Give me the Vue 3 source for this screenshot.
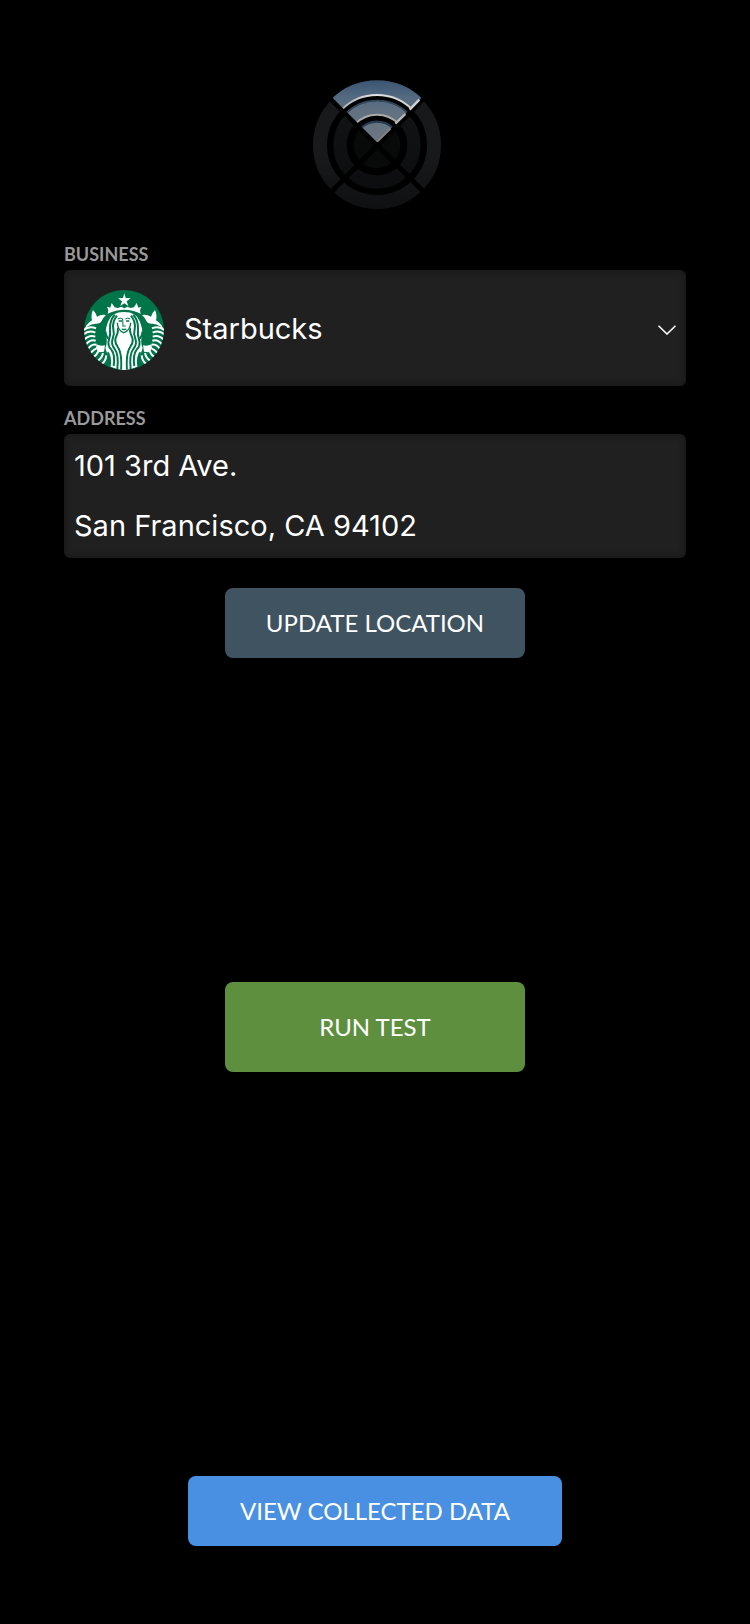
<script setup>
import { ref } from 'vue'

const business = ref('Starbucks')
const street = ref('101 3rd Ave.')
const city = ref('San Francisco, CA 94102')
</script>

<template>
  <main class="screen">
    <svg class="logo" viewBox="38 29 390 390" aria-hidden="true">
      <defs>
        <linearGradient id="steel" gradientUnits="userSpaceOnUse" x1="0" y1="30" x2="0" y2="218">
          <stop offset="0" stop-color="#3a5471" />
          <stop offset="0.25" stop-color="#526980" />
          <stop offset="0.5" stop-color="#617181" />
          <stop offset="1" stop-color="#6c7781" />
        </linearGradient>
        <linearGradient id="coal" gradientUnits="userSpaceOnUse" x1="0" y1="80" x2="0" y2="419">
          <stop offset="0" stop-color="#18191b" />
          <stop offset="0.5" stop-color="#17191b" />
          <stop offset="1" stop-color="#0e1011" />
        </linearGradient>
        <linearGradient id="coal-inner" gradientUnits="userSpaceOnUse" x1="0" y1="100" x2="0" y2="350">
          <stop offset="0" stop-color="#131415" />
          <stop offset="1" stop-color="#0c0d0e" />
        </linearGradient>
        <linearGradient id="silver" gradientUnits="userSpaceOnUse" x1="100" y1="0" x2="370" y2="0">
          <stop offset="0" stop-color="#9ba0a5" />
          <stop offset="0.45" stop-color="#e3e3e3" />
          <stop offset="1" stop-color="#c9c9c9" />
        </linearGradient>
        <clipPath id="beam"><path d="M233 216 L101 84 L60 20 H410 L363 86 Z" /></clipPath>
      </defs>
      <g fill="none">
        <circle cx="233" cy="224" r="171" stroke="url(#coal)" stroke-width="42" />
        <circle cx="233" cy="224" r="111" stroke="url(#coal-inner)" stroke-width="40" />
        <circle cx="233" cy="224" r="70" fill="#080909" />
      </g>
      <path d="M88 79 L376 367 M378 79 L92 369" stroke="#000" stroke-width="15" />
      <g clip-path="url(#beam)" fill="none">
        <path d="M233 216 L60 43 V0 H410 V39 Z" fill="#000" />
        <circle cx="233" cy="224" r="172" stroke="url(#steel)" stroke-width="44" />
        <circle cx="233" cy="224" r="111" stroke="url(#steel)" stroke-width="42" />
        <circle cx="233" cy="224" r="70" fill="url(#steel)" />
        <path d="M184 174 A70 70 0 0 1 282 174" stroke="#263a50" stroke-width="7" />
        <path d="M139 130 A133 133 0 0 1 327 130" stroke="#33475c" stroke-width="5" />
        <path d="M127 118 A150 150 0 0 1 339 118" stroke="url(#silver)" stroke-width="6" />
        <path d="M169 160 A90 90 0 0 1 297 160" stroke="#aaa9a8" stroke-width="6" />
      </g>
      <path d="M331 118 L360 88" stroke="#d2d2d2" stroke-width="7" />
      <path d="M288 160 L318 131" stroke="#b9b9b9" stroke-width="7" />
      <path d="M234 214 L274 175" stroke="#858585" stroke-width="5" />
    </svg>

    <form class="form" @submit.prevent>
      <label class="caption" for="business">BUSINESS</label>
      <div class="picker">
        <svg class="brand" viewBox="27 30 240 240" aria-hidden="true">
          <defs>
            <clipPath id="disc"><circle cx="147" cy="150" r="120" /></clipPath>
          </defs>
          <circle cx="147" cy="150" r="120" fill="#00754a" />
          <g clip-path="url(#disc)">
            <path
              d="M148 40 L152 54 L167 55 L155 64 L160 78 L148 70 L136 78 L141 64 L129 55 L144 54 Z"
              fill="#fff"
            />
            <path
              d="M98 101 L100 91 L96 80 L106 83 L110 69 L119 82 L129 84 L139 80 L148 85 L157 80 L167 84 L177 82 L185 69 L190 83 L199 80 L195 91 L197 101 Q148 78 98 101 Z"
              fill="#fff"
            />
            <g id="half">
              <path
                d="M54 90 Q65 101 66 110 Q78 103 93 105 Q84 113 80 123 Q75 132 62 131 Q49 131 39 139 L28 151 Q33 132 51 121 Q47 104 54 90 Z"
                fill="#fff"
              />
              <g fill="none" stroke="#fff" stroke-width="6">
                <path d="M26 150 Q43 136 63 145" />
                <path d="M24 164 Q42 149 61 158" />
                <path d="M26 181 Q42 163 61 170" />
                <path d="M30 197 Q44 177 62 182" />
                <path d="M37 210 Q49 190 64 194" />
                <path d="M45 222 Q54 208 72 202" />
                <path d="M54 232 Q66 225 70 213" />
                <path d="M67 243 Q81 235 84 219" />
                <path d="M80 252 Q92 244 94 226" />
              </g>
              <path d="M64 193 Q76 199 90 196 L87 215 L72 217 Q62 211 64 193 Z" fill="#fff" />
            </g>
            <use href="#half" transform="translate(294 0) scale(-1 1)" />
            <path
              d="M147 96 Q109 96 99 125 Q88 154 94 172 Q98 188 91 204 Q94 219 103 230 Q109 242 107 260 L147 274 L187 260 Q185 242 191 230 Q200 219 203 204 Q196 188 200 172 Q206 154 195 125 Q185 96 147 96 Z"
              fill="#fff"
            />
            <g id="hair" fill="none" stroke="#00754a" stroke-width="6">
              <path d="M119 104 Q103 124 105 149 Q107 164 102 178 Q96 196 109 209 Q121 224 116 258" />
              <path d="M126 107 Q111 125 115 148 Q119 162 113 176 Q107 193 119 207 Q132 224 127 267" />
              <path d="M129 143 Q130 157 124 169 Q116 184 128 200 Q142 220 138 271" />
              <path d="M91 154 Q92 165 99 176 M98 217 Q107 231 105 253" />
            </g>
            <use href="#hair" transform="translate(294 0) scale(-1 1)" />
            <path
              d="M147 101 Q126 101 126 126 Q127 151 140 158 L139 164 Q127 171 127 186 Q128 197 136 207 Q144 222 143 270 H151 Q150 222 158 207 Q166 197 167 186 Q167 171 155 164 L154 158 Q167 151 168 126 Q168 101 147 101 Z"
              fill="#fff"
            />
            <g fill="none" stroke="#00754a" stroke-width="4">
              <path d="M127 128 Q128 151 146 158 Q166 151 167 128" />
              <path d="M128 117 Q136 112 143 117 L144 137 M151 117 Q158 112 166 117" stroke-width="3" />
              <path d="M131 123 H141 M153 123 H163" />
              <path d="M142 138 H152" stroke-width="3" />
              <path d="M140 147 Q147 150 154 147" />
            </g>
          </g>
        </svg>
        <select id="business" v-model="business" class="select">
          <option>Starbucks</option>
        </select>
        <svg class="chevron" viewBox="0 0 18 10" aria-hidden="true">
          <path d="M0.5 0.7 L9 9 L17.5 0.7" fill="none" stroke="#fff" stroke-width="1.6" />
        </svg>
      </div>

      <label class="caption address-caption" for="street">ADDRESS</label>
      <div class="address">
        <input id="street" v-model="street" class="line" type="text" />
        <input v-model="city" class="line" type="text" aria-label="City, state and ZIP code" />
      </div>
    </form>

    <button class="button update" type="button">UPDATE LOCATION</button>
    <button class="button run" type="button">RUN TEST</button>
    <button class="button view" type="button">VIEW COLLECTED DATA</button>
  </main>
</template>

<style>
body {
  background: #000;
}
</style>

<style scoped>
.screen {
  box-sizing: border-box;
  min-height: 100vh;
  padding: 80px 64px 78px;
  display: flex;
  flex-direction: column;
  align-items: center;
  background: #000;
  color: #fff;
}

.screen::before {
  content: '';
  order: 1;
  flex: 4 0 0;
  min-height: 30px;
}

.screen::after {
  content: '';
  order: 3;
  flex: 5 0 0;
  min-height: 30px;
}

.logo {
  width: 130px;
  height: 130px;
  margin-left: 4px;
}

.form {
  width: 100%;
  margin-top: 32px;
  display: flex;
  flex-direction: column;
}

.caption {
  font: 700 18px/24px Lato, sans-serif;
  color: #999;
  padding-bottom: 4px;
}

.address-caption {
  margin-top: 20px;
}

.picker,
.address {
  background: #202020;
  border-radius: 6px;
  box-shadow: inset 0 0 6px #141414;
}

.picker {
  position: relative;
  height: 116px;
}

.brand {
  position: absolute;
  left: 20px;
  top: 20px;
  width: 80px;
  height: 80px;
  pointer-events: none;
}

.chevron {
  position: absolute;
  right: 10px;
  top: 55px;
  width: 18px;
  height: 10px;
  pointer-events: none;
}

.select,
.line {
  box-sizing: border-box;
  width: 100%;
  border: 0;
  background: transparent;
  color: #fff;
  font: 400 29px/40px Inter, sans-serif;
}

.select {
  appearance: none;
  height: 100%;
  padding: 2px 40px 0 120px;
}

.address {
  padding: 1px 0 3px;
}

.line {
  display: block;
  height: 60px;
  padding: 0 10px;
}

.button {
  border: 0;
  border-radius: 8px;
  padding: 0;
  color: #fff;
  font: 400 24px/32px Lato, sans-serif;
}

.update {
  width: 300px;
  height: 70px;
  margin-top: 30px;
  background: #405360;
}

.run {
  order: 2;
  width: 300px;
  height: 90px;
  background: #5e8f3f;
}

.view {
  order: 4;
  width: 374px;
  height: 70px;
  background: #4a90e2;
}
</style>
